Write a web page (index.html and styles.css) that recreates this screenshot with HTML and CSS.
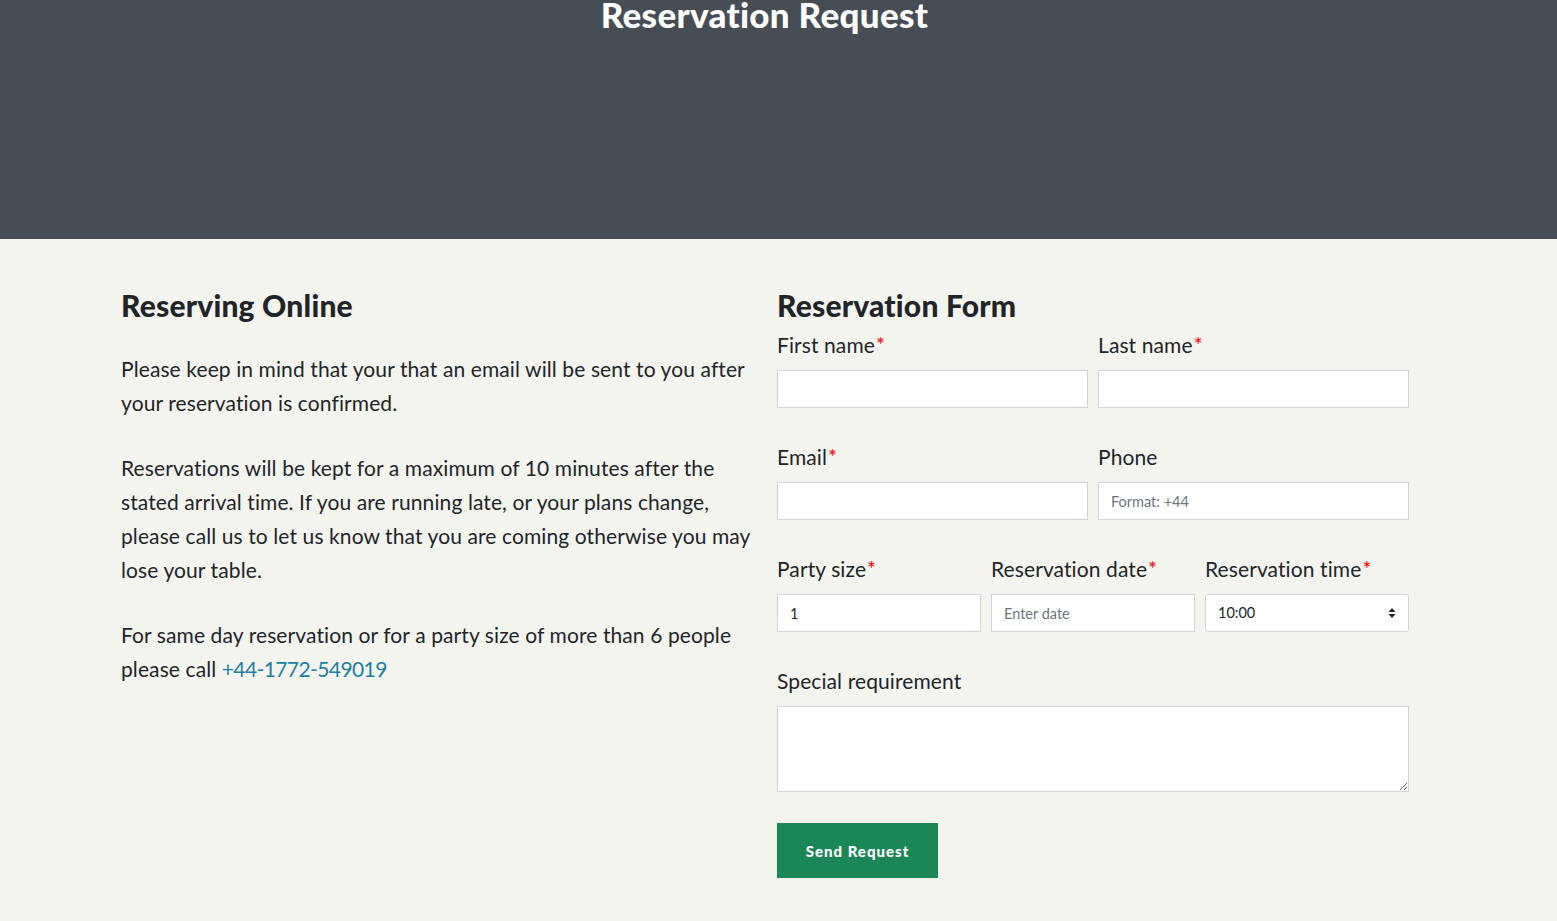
FILE: index.html
```html
<!DOCTYPE html>
<html lang="en">
<head>
<meta charset="utf-8">
<title>Reservation Request</title>
<link rel="stylesheet" href="styles.css">
</head>
<body>
<header class="hero">
  <h1 class="hero-title">Reservation Request</h1>
</header>
<main class="content">
  <section class="info">
    <h2 class="section-title">Reserving Online</h2>
    <p>Please keep in mind that your that an email will be sent to you after your reservation is confirmed.</p>
    <p>Reservations will be kept for a maximum of 10 minutes after the stated arrival time. If you are running late, or your plans change, please call us to let us know that you are coming otherwise you may lose your table.</p>
    <p>For same day reservation or for a party size of more than 6 people please call <a class="phone" href="#">+44-1772-549019</a></p>
  </section>
  <section class="form-col">
    <h2 class="section-title">Reservation Form</h2>
    <form class="form">
      <div class="row two">
        <label class="field"><span class="label">First name<span class="req">*</span></span><input class="input" type="text"></label>
        <label class="field"><span class="label">Last name<span class="req">*</span></span><input class="input" type="text"></label>
      </div>
      <div class="row two">
        <label class="field"><span class="label">Email<span class="req">*</span></span><input class="input" type="text"></label>
        <label class="field"><span class="label">Phone</span><input class="input" type="text" placeholder="Format: +44"></label>
      </div>
      <div class="row three">
        <label class="field"><span class="label">Party size<span class="req">*</span></span><input class="input" type="text" value="1"></label>
        <label class="field"><span class="label">Reservation date<span class="req">*</span></span><input class="input" type="text" placeholder="Enter date"></label>
        <label class="field"><span class="label">Reservation time<span class="req">*</span></span>
          <span class="select">10:00
            <svg class="arrows" width="8" height="12" viewBox="0 0 8 12"><path d="M4 1 L7.5 5 L0.5 5 Z M4 11 L7.5 7 L0.5 7 Z" fill="#222"/></svg>
          </span>
        </label>
      </div>
      <div class="row one">
        <label class="field"><span class="label">Special requirement</span><textarea class="textarea"></textarea></label>
      </div>
      <button class="btn" type="button">Send Request</button>
    </form>
  </section>
</main>
</body>
</html>
```
FILE: styles.css
```css
* { box-sizing: border-box; }
html, body { margin: 0; padding: 0; }
body {
  background: #f4f4ef;
  color: #212529;
  font-family: "Lato", "Liberation Sans", sans-serif;
  font-size: 21px;
  letter-spacing: 0.1px;
  line-height: 34px;
  height: 921px;
  overflow: hidden;
}
.hero {
  background: #474d55;
  height: 239px;
  display: flex;
  justify-content: center;
}
.hero-title {
  margin: -9px 0 0 -28px;
  color: #fff;
  font-family: "Lato", sans-serif;
  font-weight: 900;
  font-size: 35px;
  line-height: 46px;
  letter-spacing: 0.3px;
}
.content {
  display: grid;
  grid-template-columns: 645px 632px;
  column-gap: 11px;
  padding: 46px 0 0 121px;
}
.section-title {
  margin: 0;
  font-family: "Lato", sans-serif;
  font-weight: 900;
  font-size: 30px;
  line-height: 40px;
  letter-spacing: 0.2px;
  color: #212529;
}
.info .section-title { margin-bottom: 27px; }
.info p { margin: 0 0 31px; }
.phone { color: #1c7fa6; text-decoration: none; letter-spacing: -0.6px; }
.form { display: flex; flex-direction: column; }
.form-col .section-title { margin-bottom: 3px; }
.row { display: grid; column-gap: 10px; margin-bottom: 32px; }
.row.two { grid-template-columns: minmax(0, 1fr) minmax(0, 1fr); }
.row.three { grid-template-columns: minmax(0, 1fr) minmax(0, 1fr) minmax(0, 1fr); }
.row.one { grid-template-columns: minmax(0, 1fr); margin-bottom: 31px; }
.field { display: flex; flex-direction: column; min-width: 0; }
.label { display: block; line-height: 34px; margin-bottom: 8px; white-space: nowrap; }
.req { color: #f00; margin-left: 1px; }
.input, .select {
  width: 100%;
  height: 38px;
  border: 1px solid #ced4da;
  background: #fff;
  padding: 0 12px;
  font-family: "Lato", sans-serif;
  font-size: 14.5px;
  letter-spacing: 0;
  color: #212529;
  border-radius: 0;
  outline: none;
}
.input::placeholder { color: #6c757d; }
.select {
  display: flex;
  align-items: center;
  justify-content: space-between;
  border-radius: 3px;
  padding-right: 12px;
}
.textarea {
  height: 86px;
  border: 1px solid #ced4da;
  background: #fff;
  resize: vertical;
  outline: none;
}
.btn {
  align-self: flex-start;
  width: 161px;
  height: 55px;
  background: #1b8656;
  border: none;
  color: #fff;
  font-family: "Lato", sans-serif;
  font-weight: 900;
  font-size: 15px;
  letter-spacing: 1px;
}
```
